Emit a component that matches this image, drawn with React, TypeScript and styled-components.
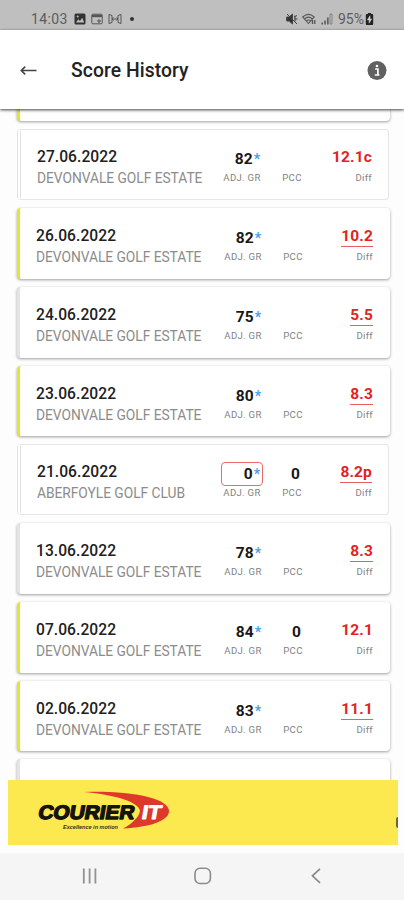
import React from "react";
import styled, { createGlobalStyle } from "styled-components";

const GlobalStyle = createGlobalStyle`
  * { box-sizing: border-box; }
  body { margin: 0; background: #fdfdfd; font-family: Roboto, "Liberation Sans", sans-serif; }
`;

const Screen = styled.div`
  width: 404px;
  height: 900px;
  display: flex;
  flex-direction: column;
  overflow: hidden;
  background: #fdfdfd;
`;

const StatusBar = styled.div`
  height: 30px;
  flex: none;
  display: flex;
  justify-content: space-between;
  padding: 9px 30px 0 31px;
  background: #bfbfbf;
  color: #5c5c5c;
  font-size: 14px;
  line-height: 20px;
`;

const StatusGroup = styled.div<{ $gap: number }>`
  display: flex;
  align-items: center;
  gap: ${(p) => p.$gap}px;
  height: 20px;
`;

const Clock = styled.span`
  letter-spacing: 0.35px;
  margin-right: 1px;
`;

const Charge = styled.span`
  letter-spacing: 0;
  margin: 0 -3px 0 1px;
`;

const Header = styled.header`
  height: 79px;
  flex: none;
  display: flex;
  align-items: center;
  padding: 2px 17px 0 20px;
  background: #fff;
  box-shadow: 0 1px 3px rgba(0, 0, 0, 0.75);
  z-index: 1;
`;

const Title = styled.h1`
  flex: 1;
  margin: 0 0 0 34px;
  font-size: 19.3px;
  font-weight: 500;
  line-height: 24px;
  color: #222;
  letter-spacing: 0.08px;
`;

const List = styled.main`
  height: 671px;
  flex: none;
  display: flex;
  flex-direction: column;
  gap: 8px;
  padding: 0 14px 0 17px;
  overflow: hidden;
`;

const Card = styled.article<{ $accent?: boolean; $flat?: boolean }>`
  flex: none;
  height: 70.75px;
  display: flex;
  padding: 18px 17px 0 16px;
  background: #fff;
  border-radius: 4px;
  border-left: 3px solid ${(p) => (p.$accent ? "#e5e62c" : "#e4e4e4")};
  box-shadow: 0 1px 3px rgba(0, 0, 0, 0.38);
  ${(p) =>
    p.$flat &&
    `
    margin-right: 1px;
    padding: 17px 16px 0 16px;
    border: 1px solid #e6e6e6;
    border-left: 4px double #e0e0e0;
    box-shadow: none;
  `}
`;

const FirstCard = styled(Card)`
  height: 12.4px;
  padding: 0;
  border-radius: 0 0 4px 4px;
`;

const Round = styled.div`
  flex: 1;
  min-width: 0;
`;

const PlayedOn = styled.div`
  font-size: 15.6px;
  font-weight: 500;
  line-height: 20px;
  letter-spacing: 0.05px;
  color: #202020;
`;

const Club = styled.div`
  margin-top: 1px;
  font-size: 13.8px;
  line-height: 20px;
  letter-spacing: -0.04px;
  color: #8c8c8c;
  white-space: nowrap;
`;

const Stat = styled.div<{ $width: number; $right?: number; $end?: boolean }>`
  width: ${(p) => p.$width}px;
  margin-right: ${(p) => p.$right ?? 0}px;
  flex: none;
  display: flex;
  flex-direction: column;
  align-items: ${(p) => (p.$end ? "flex-end" : "center")};
`;

const Value = styled.div<{ $boxed?: boolean }>`
  width: 100%;
  height: 24px;
  padding-right: 2px;
  border: 1px solid ${(p) => (p.$boxed ? "#ee6a6a" : "transparent")};
  border-radius: 4px;
  font-size: 15.5px;
  font-weight: 700;
  line-height: 23px;
  text-align: right;
  color: #181818;
`;

const Star = styled.span`
  color: #4a9ee8;
  font-size: 14px;
  font-weight: 700;
  margin-left: 1px;
`;

const Differential = styled.div<{ $underlined?: boolean }>`
  height: 21px;
  margin-bottom: 3px;
  border-bottom: 1px solid ${(p) => (p.$underlined ? "#e66060" : "transparent")};
  font-size: 15.5px;
  font-weight: 700;
  line-height: 21px;
  letter-spacing: 0.15px;
  color: #e32322;
`;

const Label = styled.div`
  font-size: 9.6px;
  line-height: 14px;
  letter-spacing: 0.3px;
  color: #828282;
  white-space: nowrap;
`;

const Banner = styled.aside`
  height: 65px;
  flex: none;
  display: flex;
  align-items: center;
  justify-content: space-between;
  margin: 0 6px 8px 8px;
  background: #fce84f;
`;

const BannerLogo = styled.svg`
  width: 170px;
  height: 65px;
`;

const BannerEdge = styled.span`
  width: 2px;
  height: 11px;
  margin-top: 19px;
  border-radius: 3px 0 0 3px;
  background: #6f682e;
`;

const NavBar = styled.nav`
  height: 47px;
  flex: none;
  display: flex;
  align-items: flex-start;
  padding: 13px 0 0 80px;
  gap: 93px;
  background: #f5f5f5;
`;

type Score = {
  date: string;
  club: string;
  gross: string;
  pcc?: string;
  diff: string;
  accent?: boolean;
  flat?: boolean;
  boxed?: boolean;
  underlined?: boolean;
};

const DEVONVALE = "DEVONVALE GOLF ESTATE";

const scores: Score[] = [
  { date: "27.06.2022", club: DEVONVALE, gross: "82", diff: "12.1c", flat: true },
  { date: "26.06.2022", club: DEVONVALE, gross: "82", diff: "10.2", accent: true, underlined: true },
  { date: "24.06.2022", club: DEVONVALE, gross: "75", diff: "5.5", underlined: true },
  { date: "23.06.2022", club: DEVONVALE, gross: "80", diff: "8.3", accent: true, underlined: true },
  { date: "21.06.2022", club: "ABERFOYLE GOLF CLUB", gross: "0", pcc: "0", diff: "8.2p", flat: true, boxed: true, underlined: true },
  { date: "13.06.2022", club: DEVONVALE, gross: "78", diff: "8.3", underlined: true },
  { date: "07.06.2022", club: DEVONVALE, gross: "84", pcc: "0", diff: "12.1", accent: true },
  { date: "02.06.2022", club: DEVONVALE, gross: "83", diff: "11.1", accent: true, underlined: true },
];

function ScoreCard({ score }: { score: Score }) {
  return (
    <Card $accent={score.accent} $flat={score.flat}>
      <Round>
        <PlayedOn>{score.date}</PlayedOn>
        <Club>{score.club}</Club>
      </Round>
      <Stat $width={42} $right={18}>
        <Value $boxed={score.boxed}>
          {score.gross}
          <Star>*</Star>
        </Value>
        <Label>ADJ. GR</Label>
      </Stat>
      <Stat $width={22}>
        <Value>{score.pcc}</Value>
        <Label>PCC</Label>
      </Stat>
      <Stat $width={69} $end>
        <Differential $underlined={score.underlined}>{score.diff}</Differential>
        <Label>Diff</Label>
      </Stat>
    </Card>
  );
}

const PictureIcon = () => (
  <svg width="12" height="12" viewBox="0 0 12 12">
    <rect x="0.5" y="0.5" width="11" height="11" rx="1.5" fill="#333" />
    <path d="M2 9.5 4.3 6.2 6 8 8.2 4.8 10.2 9.5Z" fill="#bfbfbf" />
    <circle cx="3.7" cy="3.6" r="1" fill="#bfbfbf" />
  </svg>
);

const CalendarIcon = () => (
  <svg width="12" height="12" viewBox="0 0 12 12" fill="none" stroke="#555">
    <rect x="0.8" y="1.2" width="10.4" height="9.6" rx="1" />
    <path d="M1 3h10" strokeWidth="2.4" />
    <path d="M7 7h2v2H7z" />
  </svg>
);

const BroadcastIcon = () => (
  <svg width="14" height="12" viewBox="0 0 14 12" fill="none" stroke="#555">
    <path d="M4 2.5 1 1.5v9l3-1zM10 2.5l3-1v9l-3-1zM4 6h6M5.5 4.5 4 6l1.5 1.5M8.5 4.5 10 6 8.5 7.5" />
  </svg>
);

const MoreDot = styled.span`
  width: 4px;
  height: 4px;
  margin-left: 3px;
  border-radius: 50%;
  background: #333;
`;

const MuteIcon = () => (
  <svg width="12" height="12" viewBox="0 0 12 12" fill="none" stroke="#444">
    <path d="M.7 4h2.5L6.5 1v10L3.2 8H.7z" fill="#333" />
    <path d="m1 1 10 10M8 4.2l3-1.7M8.3 6H11.5M9 2.5v6" />
  </svg>
);

const WifiIcon = () => (
  <svg width="15" height="12" viewBox="0 0 15 12" fill="none" stroke="#555" strokeWidth="1.1">
    <path d="M.8 4Q6.5-1.2 12.2 4L6.5 10.5zM2.5 5.8Q6.5 2.5 10.4 5.8M4.4 7.8Q6.5 6.2 8.5 7.8" />
    <path d="M10.5 7v4M12.8 7v4" strokeWidth="1.3" />
  </svg>
);

const SignalIcon = () => (
  <svg width="12" height="12" viewBox="0 0 12 12" fill="#555">
    <path d="M.5 9.5h1.5v2H.5zM3.3 7.5h1.5v4H3.3zM6.1 4.5h1.5v7H6.1z" />
    <path d="M9 1h2v10H9z" fill="none" stroke="#777" strokeWidth=".8" />
  </svg>
);

const BatteryIcon = () => (
  <svg width="9" height="12" viewBox="0 0 9 13">
    <path d="M2.8 0h3.4v1.2H7.5q1 0 1 1V12q0 1-1 1h-6q-1 0-1-1V2.2q0-1 1-1h1.3z" fill="#222" />
    <path d="M5 3 2.2 7.5h1.9V11L6.8 6.4H5z" fill="#cfcfcf" stroke="#cfcfcf" strokeWidth=".6" />
  </svg>
);

const BackArrow = () => (
  <svg width="17" height="14" viewBox="0 0 17 14" fill="none" stroke="#444" strokeWidth="1.6">
    <path d="M5.2 2.6 1.3 6.5 5.2 10.4M1.3 6.5H16.5" />
  </svg>
);

const InfoIcon = () => (
  <svg width="20" height="20" viewBox="0 0 20 20">
    <circle cx="10" cy="9.5" r="9.5" fill="#616161" />
    <path d="M8.2 8h2.7v5.6M7.8 14h4.6" stroke="#fff" strokeWidth="1.7" fill="none" />
    <circle cx="10" cy="5" r="1.3" fill="#fff" />
  </svg>
);

const CourierLogo = () => (
  <BannerLogo viewBox="0 0 170 65">
    <path d="M76 12C106 10.5 157 14 161 30C162 41 142 47 115 48.5C124 44 131 37 132 31C131 22 108 15 76 12Z" fill="#dc382b" />
    <g fontFamily='"Liberation Sans", Arial, sans-serif' fontWeight="700">
      <g transform="translate(29.5 38.6) skewX(-10)" strokeLinejoin="round">
        <text fontSize="19.5" textLength="96" lengthAdjust="spacingAndGlyphs" fill="#15130e" stroke="#15130e" strokeWidth="1.4">COURIER</text>
        <text x="103.5" fontSize="19.5" textLength="19.5" lengthAdjust="spacingAndGlyphs" fill="#fff" stroke="#fff" strokeWidth="1">IT</text>
      </g>
      <text x="55" y="49" fontSize="5.6" fontStyle="italic" textLength="55" lengthAdjust="spacingAndGlyphs" fill="#38331a">Excellence in motion</text>
    </g>
  </BannerLogo>
);

const RecentsIcon = () => (
  <svg width="20" height="20" viewBox="0 0 20 20" stroke="#929292" strokeWidth="1.8">
    <path d="M3.8 2.5v15M9.6 2.5v15M15.4 2.5v15" />
  </svg>
);

const HomeIcon = () => (
  <svg width="20" height="20" viewBox="0 0 20 20" fill="none" stroke="#8c8c8c" strokeWidth="1.6">
    <rect x="2" y="2.3" width="15.4" height="15.2" rx="5" />
  </svg>
);

const BackIcon = () => (
  <svg width="20" height="20" viewBox="0 0 20 20" fill="none" stroke="#858585" strokeWidth="1.6">
    <path d="M14 2.8 6.4 9.8l7.6 7" />
  </svg>
);

export default function App() {
  return (
    <>
      <GlobalStyle />
      <Screen>
        <StatusBar>
          <StatusGroup $gap={5}>
            <Clock>14:03</Clock>
            <PictureIcon />
            <CalendarIcon />
            <BroadcastIcon />
            <MoreDot />
          </StatusGroup>
          <StatusGroup $gap={4}>
            <MuteIcon />
            <WifiIcon />
            <SignalIcon />
            <Charge>95%</Charge>
            <BatteryIcon />
          </StatusGroup>
        </StatusBar>
        <Header>
          <BackArrow />
          <Title>Score History</Title>
          <InfoIcon />
        </Header>
        <List>
          <FirstCard $accent />
          {scores.map((score) => (
            <ScoreCard key={score.date} score={score} />
          ))}
          <Card />
        </List>
        <Banner>
          <CourierLogo />
          <BannerEdge />
        </Banner>
        <NavBar>
          <RecentsIcon />
          <HomeIcon />
          <BackIcon />
        </NavBar>
      </Screen>
    </>
  );
}
